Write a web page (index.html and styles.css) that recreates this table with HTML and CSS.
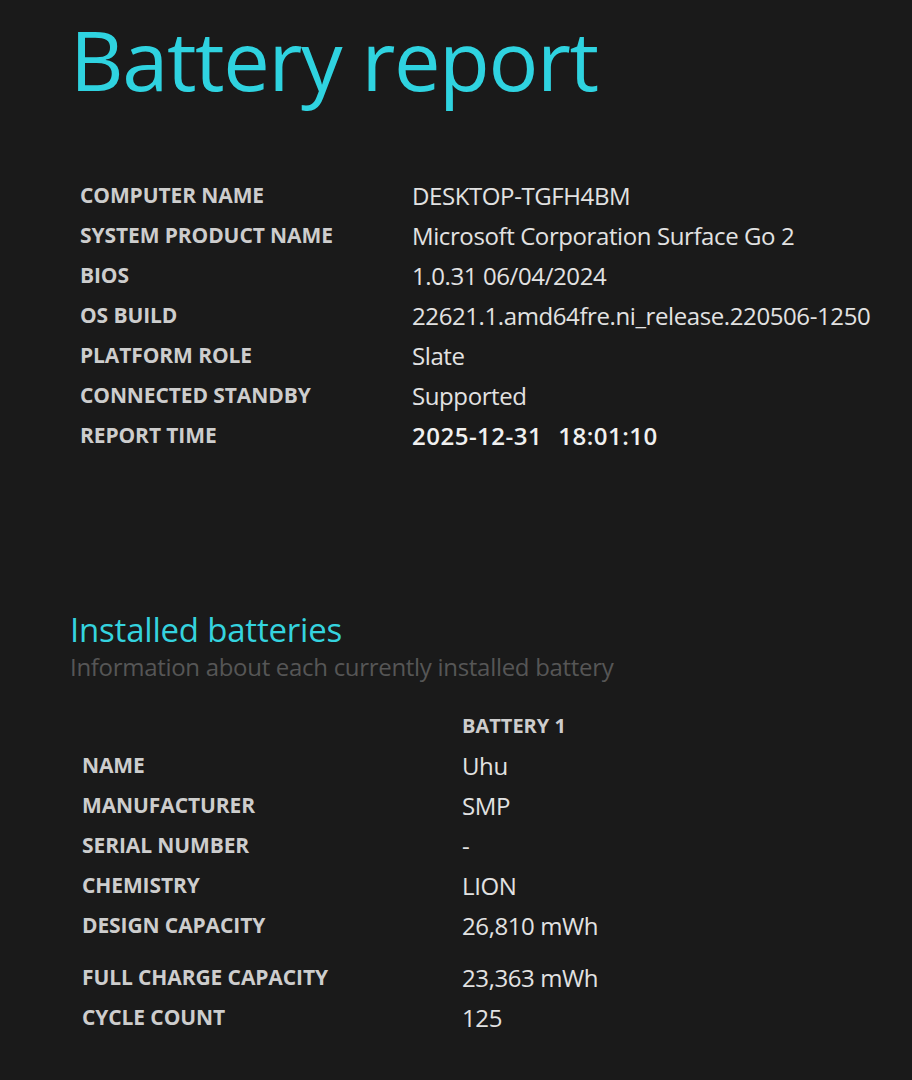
FILE: index.html
```html
<!DOCTYPE html>
<html lang="en">
<head>
<meta charset="utf-8">
<title>Battery report</title>
<link rel="stylesheet" href="styles.css">
</head>
<body>
<main class="page">
  <h1 class="title">Battery report</h1>
  <table class="info">
    <tr><td class="label">COMPUTER NAME</td><td class="value">DESKTOP-TGFH4BM</td></tr>
    <tr><td class="label">SYSTEM PRODUCT NAME</td><td class="value">Microsoft Corporation Surface Go 2</td></tr>
    <tr><td class="label">BIOS</td><td class="value">1.0.31 06/04/2024</td></tr>
    <tr><td class="label">OS BUILD</td><td class="value">22621.1.amd64fre.ni_release.220506-1250</td></tr>
    <tr><td class="label">PLATFORM ROLE</td><td class="value">Slate</td></tr>
    <tr><td class="label">CONNECTED STANDBY</td><td class="value">Supported</td></tr>
    <tr><td class="label">REPORT TIME</td><td class="value strong">2025-12-31<span class="sp"></span>18:01:10</td></tr>
  </table>

  <section class="section">
    <h2 class="heading">Installed batteries</h2>
    <p class="sub">Information about each currently installed battery</p>
    <table class="batt">
      <tr><td class="label"></td><td class="head">BATTERY 1</td></tr>
      <tr><td class="label">NAME</td><td class="value">Uhu</td></tr>
      <tr><td class="label">MANUFACTURER</td><td class="value">SMP</td></tr>
      <tr><td class="label">SERIAL NUMBER</td><td class="value">-</td></tr>
      <tr><td class="label">CHEMISTRY</td><td class="value">LION</td></tr>
      <tr class="gap"><td class="label">DESIGN CAPACITY</td><td class="value">26,810 mWh</td></tr>
      <tr><td class="label">FULL CHARGE CAPACITY</td><td class="value">23,363 mWh</td></tr>
      <tr><td class="label">CYCLE COUNT</td><td class="value">125</td></tr>
    </table>
  </section>
</main>
</body>
</html>
```

FILE: styles.css
```css
html, body {
  margin: 0;
  padding: 0;
  background: #1a1a1a;
}
body {
  font-family: "Open Sans", "Noto Sans", sans-serif;
  color: #dcdcdc;
  width: 912px;
  height: 1080px;
  overflow: hidden;
}
.page {
  padding: 0 0 0 70px;
}
.title {
  margin: 0;
  padding-top: 4px;
  font-weight: 400;
  font-size: 83px;
  line-height: 110px;
  color: #2fd3e0;
  letter-spacing: -1.4px;
}
.info, .batt {
  border-collapse: collapse;
}
.info {
  margin-top: 61px;
  margin-left: 10px;
}
.info td, .batt td {
  padding: 0;
  height: 40px;
  vertical-align: middle;
  white-space: nowrap;
}
.label {
  font-weight: 700;
  font-size: 21px;
  color: #cdcdcd;
  letter-spacing: -0.1px;
}
.info .label {
  width: 332px;
}
.value {
  font-size: 24px;
  color: #e2e2e2;
  letter-spacing: -0.4px;
}
.value.strong {
  font-weight: 600;
  color: #f0f0f0;
  letter-spacing: 0.5px;
}
.sp {
  display: inline-block;
  width: 16px;
}
.section {
  margin-top: 157px;
}
.heading {
  margin: 0;
  font-weight: 400;
  font-size: 33px;
  line-height: 36px;
  color: #35d3df;
  letter-spacing: -0.2px;
}
.sub {
  margin: 4px 0 0;
  font-size: 24px;
  line-height: 30px;
  color: #565656;
  letter-spacing: -0.3px;
}
.batt {
  margin-top: 23px;
  margin-left: 12px;
}
.batt .label {
  width: 380px;
}
.batt .head {
  font-weight: 700;
  font-size: 20px;
  color: #cdcdcd;
  height: 38px;
}
.batt .gap td {
  height: 40px;
  padding-bottom: 12px;
}
```
